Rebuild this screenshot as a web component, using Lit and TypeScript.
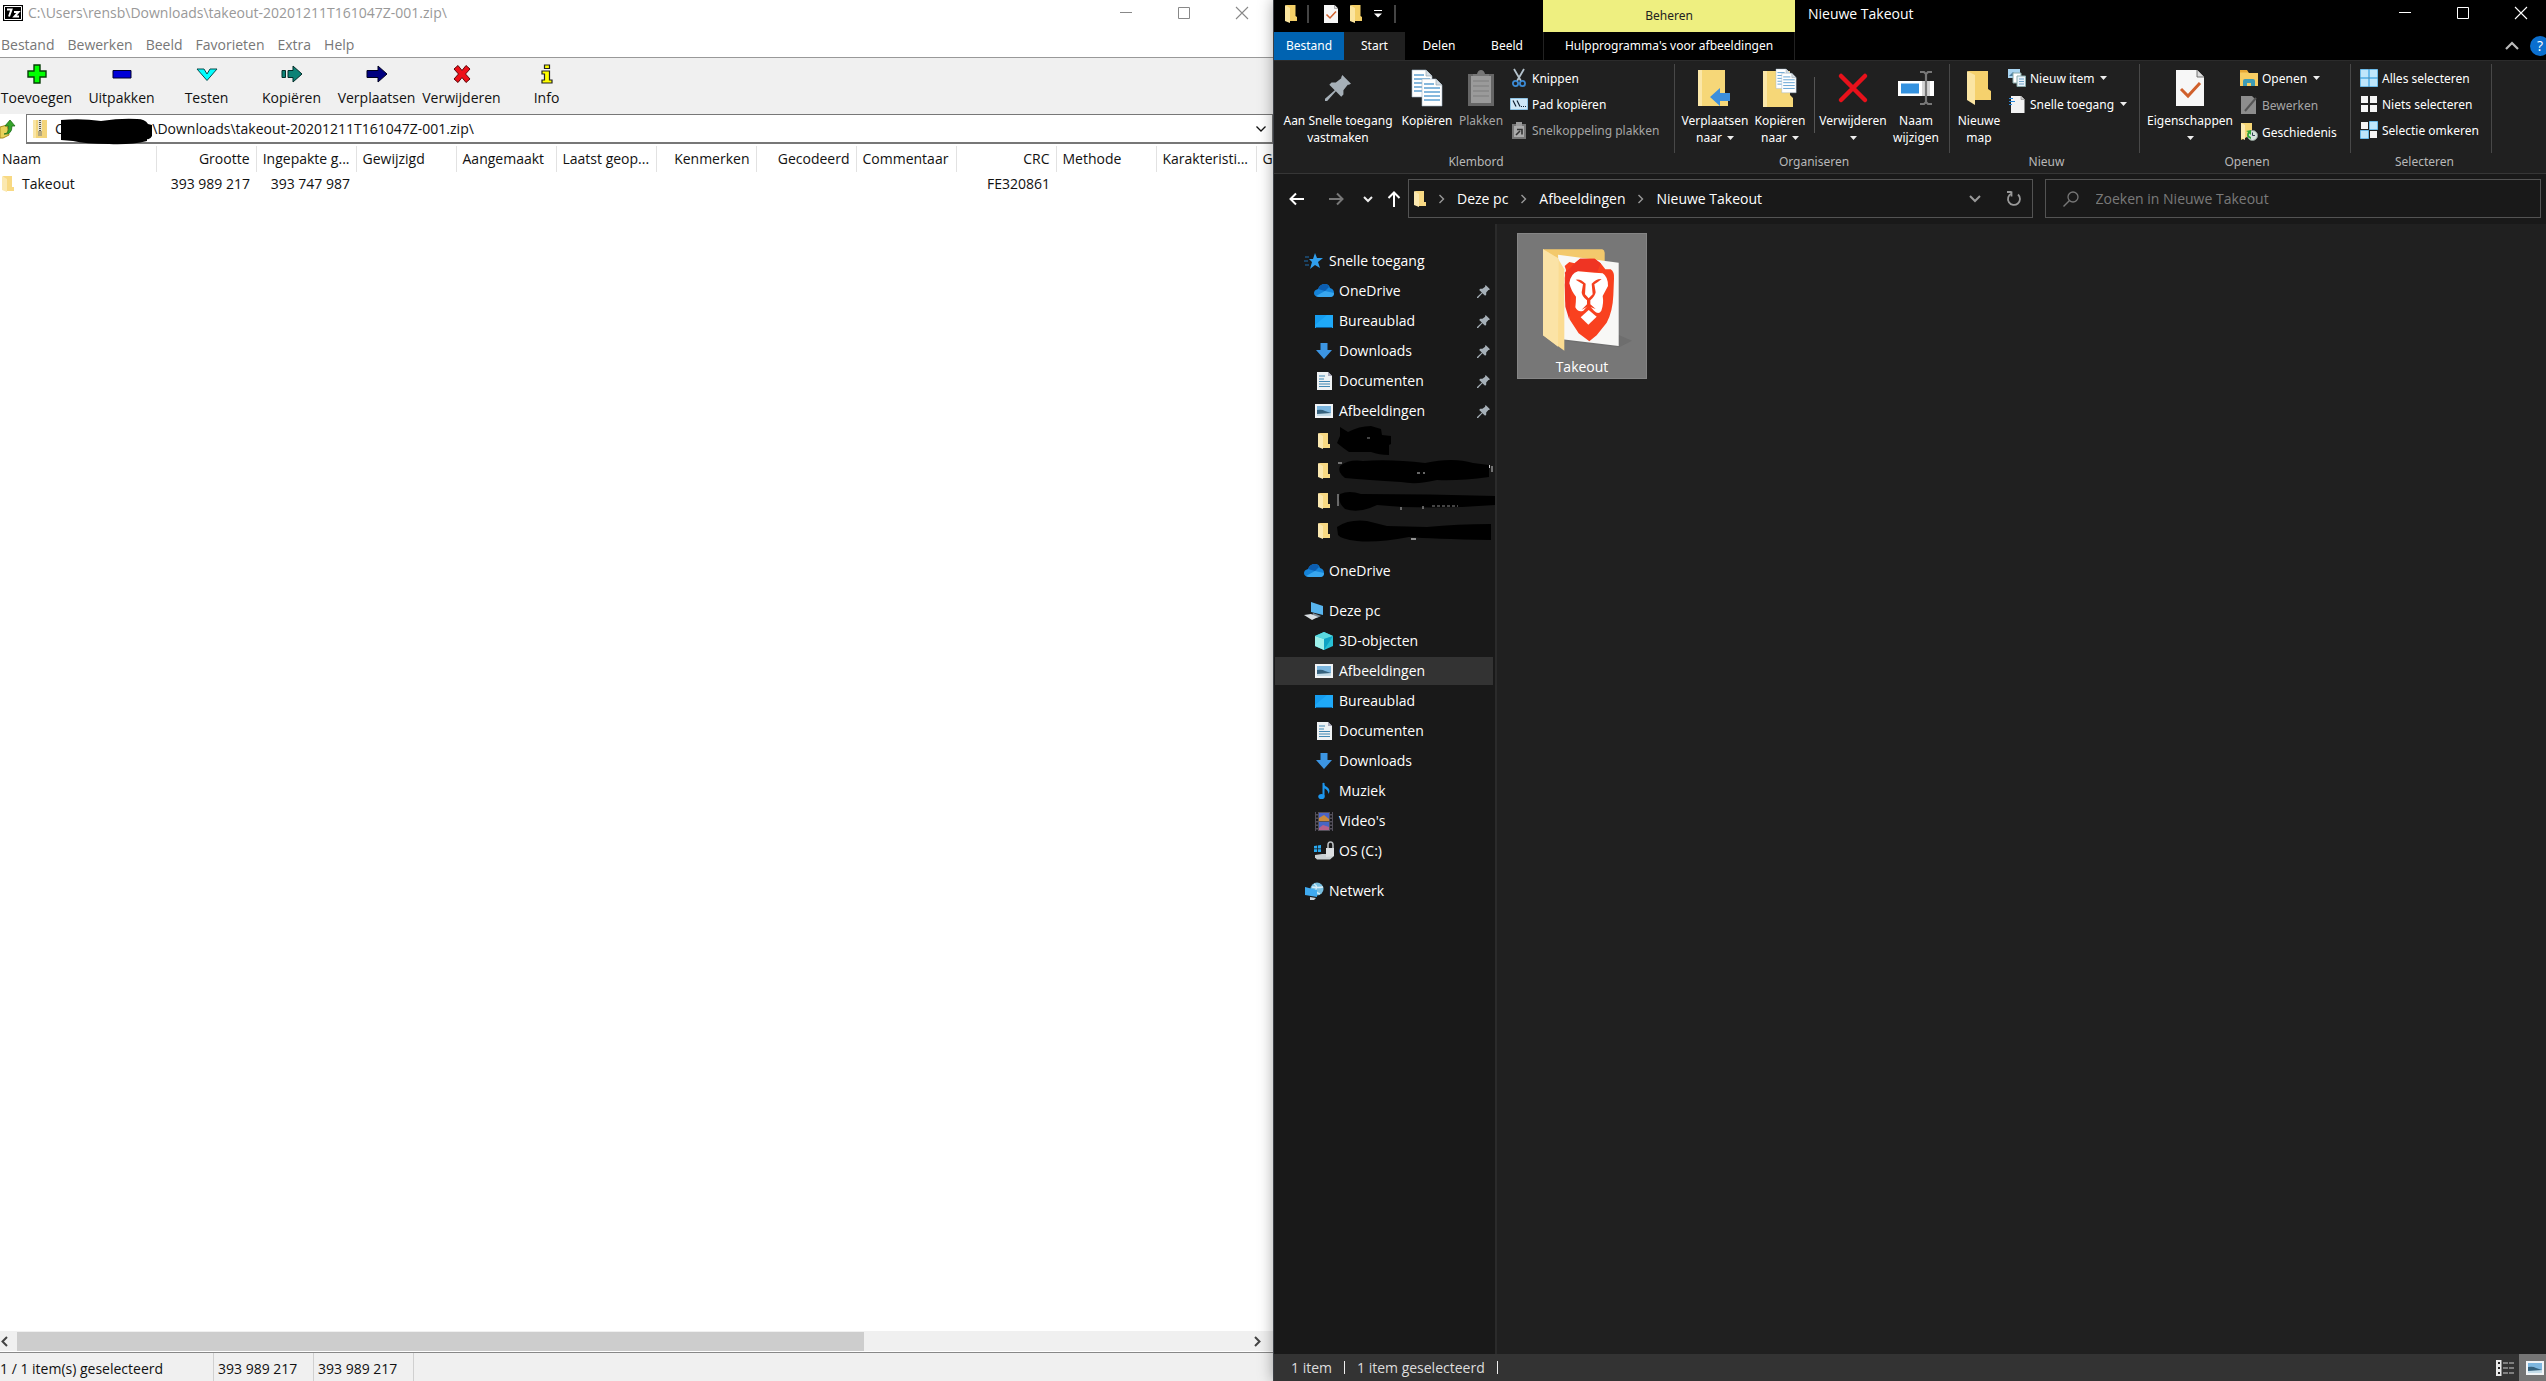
import { LitElement, html, svg, css, nothing, TemplateResult } from "lit";
import { customElement } from "lit/decorators.js";
import { classMap } from "lit/directives/class-map.js";

type Icon = TemplateResult;

const icon = (w: number, h: number, body: unknown, box = `0 0 ${w} ${h}`): Icon =>
  html`<svg width=${w} height=${h} viewBox=${box} aria-hidden="true">${body}</svg>`;

const shared = css`
  * {
    box-sizing: border-box;
  }
  button,
  input {
    font: inherit;
    color: inherit;
    background: none;
    border: 0;
    padding: 0;
    margin: 0;
    outline: 0;
  }
  svg {
    display: block;
    flex: none;
    overflow: visible;
  }
`;

/* ---------- window controls ---------- */
const minimizeIcon = icon(12, 12, svg`<path d="M0 5.5h12" stroke="currentColor"/>`);
const maximizeIcon = icon(12, 12, svg`<path d="M.5 .5h11v11H.5z" fill="none" stroke="currentColor"/>`);
const closeIcon = icon(12, 12, svg`<path d="M0 0l12 12M12 0L0 12" stroke="currentColor" stroke-width="1.1"/>`);

/* ---------- archive manager icons ---------- */
const logo7z = icon(20, 16, svg`<path d="M0 0h20v16H0z" fill="#000"/><path d="M1.5 1.5h17v13h-17z" fill="none" stroke="#fff"/>
  <path d="M4 4.5h4.500L6 11.500M11 7h4.500L11.500 11.500h4.500" fill="none" stroke="#fff" stroke-width="2"/>`);
const addIcon = icon(20, 20, svg`<path d="M7 1h6v6h6v6h-6v6H7v-6H1V7h6z" fill="#0f0" stroke="#063f06" stroke-width="1.400"/>`);
const extractIcon = icon(20, 20, svg`<path d="M1 6.500h18v7.500H1z" fill="#0000d8" stroke="#00002c"/>`);
const testIcon = icon(22, 20, svg`<path d="M1 5h7l3 5 3-5h7L11 16.500z" fill="#0ff" stroke="#0a4c4c"/>`);
const copyIcon = icon(22, 20, svg`<path d="M1 6.500h3.500v7H1zM7 6.500h5V2l9 8-9 8v-4.500H7z" fill="#0c8276" stroke="#032c28"/>`);
const moveIcon = icon(22, 20, svg`<path d="M1 6.500h11V2l9 8-9 8v-4.500H1z" fill="#000080" stroke="#00001e"/>`);
const deleteIcon = icon(18, 20, svg`<path d="M1 5l4-3.500 4 5 4-5L17 5l-4.500 5L17 15l-4 3.500-4-5-4 5L1 15l4.500-5z" fill="#ee1018" stroke="#5d0508"/>`);
const infoIcon = icon(12, 20, svg`<path d="M3.500 1h5v3.500h-5zM1 7h7.500v9H11v3H1v-3h2.500v-6H1z" fill="#ff0" stroke="#222" stroke-width="1.200"/>`);
const upFolderIcon = icon(15, 20, svg`<path d="M0 8l7-2 2 10-6 3H0z" fill="#e8d25c" stroke="#a88c20"/>
  <path d="M4 15q5 0 4.500-8H5l5-6 5 6h-3q0 9-8 8z" fill="#35a42a" stroke="#1b6b16" stroke-width=".8"/>`);
const zipIcon = icon(14, 18, svg`<path d="M0 0h14v18H0z" fill="#f3d47a"/><path d="M0 0h3v18H0z" fill="#f9e5a5"/>
  <path d="M5 0h4v11H5z" fill="#e9e4d0"/><path d="M7 0v11" stroke="#5d5a4c" stroke-width="2" stroke-dasharray="1 1"/>
  <path d="M5 11h4v5H5z" fill="#b5a87c"/>`);
const chevronDown = icon(10, 6, svg`<path d="M.5 .5L5 5 9.500 .5" fill="none" stroke="currentColor" stroke-width="1.300"/>`);
const arrowLeft = icon(7, 11, svg`<path d="M6 1L1.500 5.500 6 10" fill="none" stroke="#444" stroke-width="2"/>`);
const arrowRight = icon(7, 11, svg`<path d="M1 1l4.500 4.500L1 10" fill="none" stroke="#444" stroke-width="2"/>`);
const pathRedaction = icon(92, 26, svg`<path d="M0 1Q20 -1 40 2 60 -1 76 0q8 0 11 5l4 1v11q-2 4-5 3v2Q70 26 48 25 24 25 12 22L0 21z" fill="#000"/>`);

/* ---------- explorer icons ---------- */
const folder = icon(12, 18, svg`<path d="M1 0h9.500v11l1.500 1v4H4z" fill="#f4cf67"/><path d="M0 0l5 3v15l-5-2z" fill="#fbe59f"/>`);
const folderSoft = icon(12, 16, svg`<path d="M1 0h9v11h2v4H4z" fill="#f8d983"/><path d="M0 0l5 3v13l-5-2z" fill="#fbe8b0"/>`);
const checkDoc = (w: number, h: number) =>
  icon(w, h, svg`<path d="M0 0h21l7 7v29H0z" fill="#f7f7f7"/><path d="M21 0v7h7" fill="#ddd" stroke="#555" stroke-width=".8"/>
  <path d="M5 19l7 7 12-13" fill="none" stroke="#d0602c" stroke-width="3"/>`, "0 0 28 36");
const quickCaret = icon(8, 8, svg`<path d="M0 .5h8" stroke="#fff"/><path d="M0 3.500h8l-4 4z" fill="#fff"/>`);
const caret = icon(7, 4, svg`<path d="M0 0h7L3.500 4z" fill="#eee"/>`);
const pinShape = svg`<path d="M16 0l8 8-2 1-1 0-4 5 0 4-2 2-5-5-8 9-2 0 0-2 9-8-5-5 2-2 4 0 5-4 0-1z" fill="#a6b0b8"/>`;
const bigPin = icon(26, 26, pinShape, "0 0 24 24");
const smallPin = icon(13, 13, pinShape, "0 0 24 24");
const page = (x: number, y: number) => svg`<g transform="translate(${x} ${y})">
  <path d="M0 0h14l6 6v21H0z" fill="#fff" stroke="#9db4c4" stroke-width=".6"/><path d="M14 0v6h6" fill="#d4dde4" stroke="#8a9aa5" stroke-width=".6"/>
  <path d="M2 5h10M2 9h16M2 13h16M2 17h16M2 21h16" stroke="#5fa1d2" stroke-width="1.300"/></g>`;
const copyPages = icon(30, 36, svg`${page(0, 0)}${page(10, 9)}`);
const clipboard = icon(26, 36, svg`<path d="M0 4h26v32H0z" fill="#666"/><path d="M3 6h20v27H3z" fill="#9a9a9a"/>
  <path d="M5 6V4h4q1-4 4-4t4 4h4v2z" fill="#777"/><path d="M5 11h16M5 16h16M5 21h16M5 26h16" stroke="#7d7d7d"/>`);
const scissors = icon(14, 18, svg`<path d="M2 0l7 12M12 0L5 12" stroke="#b4c2cc" stroke-width="1.800"/>
  <circle cx="3.500" cy="14.500" r="2.600" fill="none" stroke="#3b8ad4" stroke-width="1.800"/><circle cx="10.500" cy="14.500" r="2.600" fill="none" stroke="#3b8ad4" stroke-width="1.800"/>`);
const copyPath = icon(18, 12, svg`<path d="M.5 .5h17v11H.5z" fill="#cfe8f8" stroke="#8fc3e4"/>
  <path d="M3 2.500l3 6M7 2.500l3 6" stroke="#123" stroke-width="1.200"/><path d="M11 8.500h5" stroke="#123" stroke-dasharray="1 1"/>`);
const pasteLink = icon(14, 17, svg`<path d="M0 2h14v15H0z" fill="#777"/><path d="M2 4h10v11H2z" fill="#aaa"/><path d="M4 0h6v4H4z" fill="#999"/>
  <path d="M4 13l4-4M5 7.500h5v5" fill="none" stroke="#333" stroke-width="1.600"/>`);
const moveTo = icon(34, 36, svg`<path d="M0 0h27v24l3 3v9H0z" fill="#f6d778"/><path d="M0 0h4v36H0z" fill="#fbe7a8"/>
  <path d="M12 27l10-9v5h10v8H22v5z" fill="#3d8fdc"/>`);
const copyTo = icon(34, 38, svg`<path d="M0 2h27v24l3 3v9H0z" fill="#f6d778"/><path d="M0 2h4v36H0z" fill="#fbe7a8"/>
  <g transform="translate(13 0) scale(.72)">${page(0, 0)}${page(8, 6)}</g>`);
const bigDelete = icon(28, 28, svg`<path d="M2 2l24 24M26 2L2 26" stroke="#e8111b" stroke-width="4.500" stroke-linecap="round"/>`);
const rename = icon(36, 34, svg`<path d="M0 10h36v15H0z" fill="#fff"/><path d="M3 12.500h18v10H3z" fill="#3391df"/><path d="M24 10h8v15h-8z" fill="#d5d5d5"/>
  <path d="M22 1h4l2 2 2-2h4M22 33h4l2-2 2 2h4M28 3v28" fill="none" stroke="#777" stroke-width="2.200"/>`);
const newFolder = icon(24, 34, svg`<path d="M1 0h20v18l3 2v9H7z" fill="#f5d16d"/><path d="M0 0l8 4v30l-8-5z" fill="#fbe5a3"/>`);
const newItem = icon(18, 18, svg`<path d="M0 0h12v9H0z" fill="#a8d4f0"/><path d="M1 7l4-4 4 4z" fill="#4c7fa0"/>
  <path d="M5 4h8v10H5z" fill="#fff" stroke="#8aa"/><path d="M9 7h8.500v10.500H9z" fill="#e8f2fa" stroke="#8aa"/><path d="M11 10h5M11 12.500h5M11 15h5" stroke="#6ea3c9"/>`);
const quickAccess = icon(16, 18, svg`<path d="M2 1h10l3.500 3.500V18H2z" fill="#f3f3f3"/><path d="M12 1v3.500h3.500" fill="#ccc" stroke="#888" stroke-width=".6"/>
  <path d="M0 3.500h4M0 6.500h6M0 9.500h3" stroke="#2b88d8" stroke-width="1.200"/>`);
const openIcon = icon(18, 17, svg`<path d="M0 1h7l2 2h9v13H0z" fill="#f7cd62"/><path d="M0 0h7l1.500 2.500H0z" fill="#e7a936"/>
  <path d="M3 16v-5q0-2 2-2h8q2 0 2 2v5h-4v-3H7v3z" fill="#3d9bb5"/>`);
const editIcon = icon(16, 18, svg`<path d="M0 0h11l4 4v14H0z" fill="#8d8d8d"/><path d="M4 15L15 2" stroke="#555" stroke-width="2"/>`);
const historyIcon = icon(17, 18, svg`<path d="M0 0h11v14H6L0 17z" fill="#f6d676"/><path d="M0 0l4 2v15l-4-2z" fill="#fcebb2"/>
  <circle cx="11.500" cy="12.500" r="5" fill="#d7e3dc" stroke="#8e9b94"/><path d="M10 16q-6-2-3-7l-2-1 5-1 0 5-1.500-1.500q-2 2 1.500 3.500z" fill="#2ea836"/><path d="M11.500 9.500v3h2.500" fill="none" stroke="#345"/>`);
const grid = (fills: string[]) =>
  icon(18, 18, fills.map((on, i) => {
    const x = (i % 2) * 9, y = Math.floor(i / 2) * 9;
    return on === "b"
      ? svg`<path d="M${x + 0.5} ${y + 0.5}h8v8h-8z" fill="#bfe6fb" stroke="#6cbbea"/>`
      : svg`<path d="M${x + 1} ${y + 1}h7v7h-7z" fill="#f5f5f5"/>`;
  }));
const collapse = icon(14, 8, svg`<path d="M1 7l6-6 6 6" fill="none" stroke="#bbb" stroke-width="2.200"/>`);
const navBack = icon(16, 12, svg`<path d="M15 6H1.500M7 .5L1.500 6 7 11.500" fill="none" stroke="#fff" stroke-width="2"/>`);
const navForward = icon(16, 12, svg`<path d="M1 6h13.500M9 .5L14.500 6 9 11.500" fill="none" stroke="#777" stroke-width="2"/>`);
const navRecent = icon(10, 6, svg`<path d="M1 1l4 4 4-4" fill="none" stroke="#eee" stroke-width="2"/>`);
const navUp = icon(12, 16, svg`<path d="M6 16V1.500M.5 7L6 1.500 11.500 7" fill="none" stroke="#fff" stroke-width="2"/>`);
const crumbArrow = icon(5, 8, svg`<path d="M.5 0l4 4-4 4" fill="none" stroke="#999" stroke-width="1.400"/>`);
const addressDown = icon(12, 7, svg`<path d="M1 1l5 5 5-5" fill="none" stroke="#999" stroke-width="2"/>`);
const refresh = icon(14, 15, svg`<path d="M4.500 2.500A6 6 0 1 0 11 3.500M4.500 .5v5M0 1h4.500" fill="none" stroke="#999" stroke-width="1.800"/>`);
const search = icon(16, 16, svg`<circle cx="10" cy="6" r="5" fill="none" stroke="#777" stroke-width="1.300"/><path d="M6.500 9.500L.5 15.500" stroke="#777" stroke-width="1.500"/>`);

const star = icon(20, 18, svg`<path d="M11 1l2 5h6l-5 4 2 6-5-3-5 4 2-7-3-3h4z" fill="#2f9fee"/><path d="M1 5h4M0 9h4M1 13h4" stroke="#1f6fb0"/>`);
const cloud = icon(20, 14, svg`<path d="M4 13Q0 12 0 9t4-4q2-5 7-5 4 0 5 4 4 1 4 5 0 4-4 4z" fill="#1583d8"/><path d="M4 5q2-5 7-5 3 0 4 3l-4 4z" fill="#0c5db0"/>
  <path d="M2 12l9-5 9 2q0 4-4 4H5z" fill="#38a6ee"/>`);
const desktop = icon(18, 13, svg`<path d="M0 0h18v13H0z" fill="#169df0"/><path d="M0 10L12 0h6v13H0z" fill="#1fa9f8"/><path d="M1 12.500h16" stroke="#0a5c9a"/>`);
const download = icon(16, 16, svg`<path d="M4.500 0h7v7H16l-8 9-8-9h4.500z" fill="#3c95e2"/>`);
const documents = icon(15, 18, svg`<path d="M0 0h11l4 4v14H0z" fill="#eef1f3"/><path d="M11 0v4h4" fill="#aab"/>
  <path d="M2 4h6M2 7h5M2 9.500h11M2 12h11M2 14.500h11" stroke="#3f87b4" stroke-width="1.200"/>`);
const pictures = icon(18, 14, svg`<path d="M0 0h18v14H0z" fill="#f1f4f6"/><path d="M2 2h14v10H2z" fill="#7db7e0"/><path d="M2 6q5-1 8 1l6 2v3H2z" fill="#35627e"/><path d="M2 10l14-1v3H2z" fill="#c4dce8"/>`);
const thisPc = icon(20, 18, svg`<path d="M7 0l12 4v9L7 10z" fill="#58b5ee"/><path d="M9 11l8 3-4 2-5-2z" fill="#7d8c98"/><path d="M0 13l7-1 7 3-6 3z" fill="#d9dfe3"/>`);
const objects3d = icon(18, 18, svg`<path d="M9 0l9 4v10l-9 4-9-4V4z" fill="#28c1d6"/><path d="M0 4l9 3v11l-9-4z" fill="#9df0ea"/><path d="M9 0l9 4-9 3-9-3z" fill="#5ad9df"/><path d="M9 18V7l9-3z" fill="#0fa3c4"/>`);
const music = icon(12, 18, svg`<path d="M5.500 1v13.500" stroke="#1c96ee" stroke-width="2"/><ellipse cx="3.500" cy="14.500" rx="3.200" ry="2.600" fill="#1c96ee"/><path d="M5 0q1 4 4 5 4 3 1.500 7Q10 7 5 6z" fill="#1c96ee"/>`);
const video = icon(18, 19, svg`<path d="M0 0h18v19H0z" fill="#54505a"/><path d="M4 1h10v8H4z" fill="#4a64c8"/><path d="M4 10h10v8H4z" fill="#4766c4"/>
  <path d="M4 6l5-3 5 4v2H4z" fill="#c98a3e"/><path d="M4 16l4-3 6 2v3H4z" fill="#b5618c"/><path d="M2 0v19M16 0v19" stroke="#17171a" stroke-width="2" stroke-dasharray="2 1.500"/>`);
const drive = icon(20, 18, svg`<path d="M0 4l7-1v7H0z" fill="#29a9f0"/><path d="M3.500 3v7M0 6.800h7" stroke="#191919" stroke-width=".8"/>
  <path d="M1 13l7-1h12v2l-4 3.500H3l-2-2z" fill="#c9cfd2"/><path d="M12 6h8v8l-8 1z" fill="#dde0e2"/><path d="M14 6V3q0-3 2.500-3Q19 0 19 3v3" fill="none" stroke="#b9bdc0" stroke-width="1.600"/>`);
const network = icon(19, 18, svg`<circle cx="12" cy="7" r="6.500" fill="#78bfe0"/><path d="M9 2q4 2 2 5t4 5M7 5q6 1 11 0" fill="none" stroke="#d7eef8" stroke-width="1.300"/>
  <path d="M0 5l12 3v7L0 13z" fill="#3faaf0"/><path d="M5 15l6 1-2 2H5z" fill="#c9d2d8"/>`);

const folderPreview = icon(80, 104, svg`
  <path d="M66 278L232 298 270 278 232 262z" fill="#666" opacity=".5"/>
  <path d="M3 4h178q7 2 7 10v60H30z" fill="#f3c96c"/>
  <path d="M48 20l182 24v250L60 274z" fill="#f8f8f6"/>
  <path d="M98 46l16-14h44l18 14 14 18h16q12 8 10 28l-2 50q-2 50-20 82l-30 38-22 18-32-24-26-40-14-60-2-66 4-24-4-12 14-12z" fill="#f9411f"/>
  <path d="M98 46l16-14h44l18 14-10 26-58-4-20 22-6 126-12-40-2-66 4-24-4-12 14-12z" fill="#ef3423"/>
  <path d="M108 70l50 4 24 2q16 10 16 38l-16 30q4 22-4 44-8 14-22 0l-16-18-16 18q-16 6-24-10 2-18 2-32-14-16-20-40 4-30 26-36z" fill="#fff"/>
  <path d="M101 95q14-4 30 12l-2 32 11 12 12-12-3-32q14-16 30-14-12 10-22 16l4 24q-2 12-16 24v12l16 14-22-8-20 10 16-16v-12q-16-12-16-24l4-24z" fill="#f4401f"/>
  <path d="M140 186l24 20-25 24-23-22z" fill="#fff"/>
  <path d="M3 4l44 26 20 34v244L3 262z" fill="#fbdc92"/>
  <path d="M3 4l44 26 3 8-2 258L3 262z" fill="#fbe3a6"/>`, "0 0 240 312");

const detailsView = icon(18, 16, svg`<path d="M0 0h5.500v16H0z" fill="#e8e8e8"/><path d="M2 2h2v2H2zM2 7h2v2H2zM2 12h2v2H2z" fill="#222"/><path d="M7 3h11M7 8h11M7 13h11" stroke="#ccc" stroke-dasharray="5 1"/>`);

const marks = [
  icon(55, 30, svg`<path d="M3 1l8 5Q22 0 34 0l10 3 1 6 9 1v8l-2 1v10q-10 0-18-3H12Q6 22 0 17l3-7z" fill="#000"/><path d="M30 12h3" stroke="#888"/>`),
  icon(150, 26, svg`<path d="M3 8Q12 1 26 3q28-2 62 2 28-6 48 0l16 2v12q-30 4-52 3-20 5-36 2Q30 22 8 20 0 14 3 8z" fill="#000"/><path d="M1 5h4M80 15h3M86 15h2" stroke="#ccc"/><path d="M152.500 7v3M155 8v6" stroke="#ccc"/>`),
  icon(156, 22, svg`<path d="M3 4Q12 0 24 4q70 0 134 2v9Q90 20 40 15 22 24 8 19 0 12 3 4z" fill="#000"/><path d="M1 4v12M64 17v3M86 16v3" stroke="#bbb"/><path d="M95 16h26" stroke="#888" stroke-dasharray="3 2"/>`),
  icon(156, 24, svg`<path d="M0 8Q12 0 30 2l20 5 40 1q30-3 64-3v16q-60-1-82-3Q40 24 20 22 4 20 1 16z" fill="#000"/><path d="M74 20h5" stroke="#bbb" stroke-width="1.500"/>`),
];

@customElement("zip-window")
class ZipWindow extends LitElement {
  static styles = [
    shared,
    css`
      :host {
        display: flex;
        flex-direction: column;
        min-width: 0;
        overflow: hidden;
        background: #fff;
        color: #111;
        font: 14px/20px "Open Sans", "Noto Sans", sans-serif;
      }
      .title {
        display: flex;
        align-items: center;
        height: 26px;
        padding: 0 2px 0 3px;
        gap: 5px;
        color: #999;
      }
      h1 {
        flex: 1;
        margin: 0;
        font: inherit;
        white-space: nowrap;
      }
      .control {
        width: 58px;
        height: 26px;
        display: grid;
        place-items: center;
        color: #888;
      }
      .controls {
        display: flex;
      }
      .menu {
        display: flex;
        gap: 13px;
        align-items: center;
        height: 31px;
        padding: 6px 1px 0;
        color: #777;
      }
      .toolbar {
        display: flex;
        height: 57px;
        border-top: 1px solid #999;
        background: #f0f0f0;
      }
      .tool {
        width: 85px;
        flex: none;
        display: flex;
        flex-direction: column;
        align-items: center;
        padding-top: 6px;
        gap: 4px;
      }
      .tool:first-child {
        margin-left: -6px;
      }
      .address {
        display: flex;
        align-items: stretch;
        height: 30px;
      }
      .up {
        width: 26px;
        display: flex;
        align-items: center;
      }
      .combo {
        position: relative;
        flex: 1;
        display: flex;
        align-items: center;
        gap: 8px;
        padding: 0 6px;
        border: 1px solid #777;
        border-bottom-width: 2px;
      }
      .combo input {
        flex: 1;
        min-width: 0;
      }
      .redaction {
        position: absolute;
        left: 34px;
        top: 4px;
      }
      .list {
        flex: 1;
        overflow: hidden;
        padding-top: 2px;
      }
      table {
        width: 1356px;
        table-layout: fixed;
        border-collapse: collapse;
      }
      .first {
        width: 156px;
      }
      .col {
        width: 100px;
      }
      th,
      td {
        height: 26px;
        padding: 0 6px;
        font-weight: 400;
        text-align: left;
        white-space: nowrap;
        overflow: hidden;
      }
      th {
        border-right: 1px solid #e2e2e2;
      }
      th:first-child,
      td:first-child {
        padding-left: 2px;
      }
      td {
        height: 24px;
      }
      .num {
        text-align: right;
      }
      .name {
        display: flex;
        align-items: center;
        gap: 8px;
      }
      .scroll {
        display: flex;
        align-items: center;
        height: 20px;
        padding: 0 12px 0 1px;
        background: #f0f0f0;
      }
      .track {
        flex: 1;
        height: 19px;
        padding: 0 10px 0 9px;
      }
      .thumb {
        width: 69%;
        height: 100%;
        background: #cdcdcd;
      }
      .status {
        display: flex;
        height: 29px;
        margin-top: 1px;
        border-top: 1px solid #888;
        background: #f0f0f0;
      }
      .cell {
        width: 100px;
        padding-left: 4px;
        border-right: 1px solid #d0d0d0;
        line-height: 32px;
      }
      .cell:first-child {
        width: 214px;
        padding: 0;
      }
    `,
  ];

  private tools: [Icon, string][] = [
    [addIcon, "Toevoegen"],
    [extractIcon, "Uitpakken"],
    [testIcon, "Testen"],
    [copyIcon, "Kopiëren"],
    [moveIcon, "Verplaatsen"],
    [deleteIcon, "Verwijderen"],
    [infoIcon, "Info"],
  ];

  private columns: [string, string, boolean][] = [
    ["Grootte", "393 989 217", true],
    ["Ingepakte g...", "393 747 987", true],
    ["Gewijzigd", "", false],
    ["Aangemaakt", "", false],
    ["Laatst geop...", "", false],
    ["Kenmerken", "", true],
    ["Gecodeerd", "", true],
    ["Commentaar", "", false],
    ["CRC", "FE320861", true],
    ["Methode", "", false],
    ["Karakteristi...", "", false],
    ["G", "", false],
  ];

  render() {
    const path = "C:\\Users\\rensb\\Downloads\\takeout-20201211T161047Z-001.zip\\";
    return html`
      <header class="title">
        ${logo7z}
        <h1>${path}</h1>
        <div class="controls">
          <button class="control" aria-label="Minimaliseren">${minimizeIcon}</button>
          <button class="control" aria-label="Maximaliseren">${maximizeIcon}</button>
          <button class="control" aria-label="Sluiten">${closeIcon}</button>
        </div>
      </header>
      <nav class="menu">
        ${["Bestand", "Bewerken", "Beeld", "Favorieten", "Extra", "Help"].map((m) => html`<button>${m}</button>`)}
      </nav>
      <div class="toolbar">
        ${this.tools.map(([i, t]) => html`<button class="tool">${i}<span>${t}</span></button>`)}
      </div>
      <div class="address">
        <button class="up" aria-label="Omhoog">${upFolderIcon}</button>
        <div class="combo">
          ${zipIcon}
          <input aria-label="Pad" .value=${path} />
          <span class="redaction">${pathRedaction}</span>
          <button aria-label="Paden">${chevronDown}</button>
        </div>
      </div>
      <main class="list">
        <table>
          <colgroup>
            <col class="first" />
            ${this.columns.map(() => html`<col class="col" />`)}
          </colgroup>
          <thead>
            <tr>
              <th>Naam</th>
              ${this.columns.map(([h, , n]) => html`<th class=${classMap({ num: n })}>${h}</th>`)}
            </tr>
          </thead>
          <tbody>
            <tr>
              <td><span class="name">${folderSoft}Takeout</span></td>
              ${this.columns.map(([, v, n]) => html`<td class=${classMap({ num: n })}>${v}</td>`)}
            </tr>
          </tbody>
        </table>
      </main>
      <div class="scroll">
        <button aria-label="Naar links">${arrowLeft}</button>
        <div class="track"><div class="thumb"></div></div>
        <button aria-label="Naar rechts">${arrowRight}</button>
      </div>
      <footer class="status">
        <span class="cell">1 / 1 item(s) geselecteerd</span>
        <span class="cell">393 989 217</span>
        <span class="cell">393 989 217</span>
      </footer>
    `;
  }
}

interface Big {
  icon: Icon;
  lines: string[];
  size: string;
  menu?: boolean;
  dim?: boolean;
  rule?: boolean;
}
interface Small {
  icon: Icon;
  text: string;
  menu?: boolean;
  dim?: boolean;
}
interface Group {
  label: string;
  name: string;
  big: Big[];
  small: Small[];
}
interface Place {
  icon: Icon;
  text?: string;
  top?: boolean;
  pinned?: boolean;
  active?: boolean;
  gap?: boolean;
  mark?: number;
}

@customElement("explorer-window")
class ExplorerWindow extends LitElement {
  static styles = [
    shared,
    css`
      :host {
        position: relative;
        display: flex;
        flex-direction: column;
        min-width: 0;
        overflow: hidden;
        background: #202020;
        color: #fff;
        border-left: 1px solid #3c4046;
        font: 14px/20px "Open Sans", "Noto Sans", sans-serif;
      }
      .top {
        display: grid;
        grid-template-columns: 269px 252px 1fr auto;
        grid-template-rows: 32px 28px;
        background: #000;
      }
      .quick {
        display: flex;
        align-items: center;
        height: 28px;
        padding-left: 11px;
      }
      .rule {
        width: 2px;
        height: 18px;
        border: 1px solid #444;
        margin: 0 15px 0 10px;
      }
      .quick .after {
        margin: 0 12px;
      }
      .context {
        display: grid;
        place-items: center;
        background: #eeef80;
        color: #222;
        font: 12px/18px "Noto Sans", sans-serif;
      }
      h1 {
        margin: 0;
        padding: 4px 0 0 13px;
        font: inherit;
      }
      .controls {
        display: flex;
        margin-right: -4px;
      }
      .control {
        width: 58px;
        height: 26px;
        display: grid;
        place-items: center;
      }
      .tabs {
        display: flex;
        font: 12px/18px "Noto Sans", sans-serif;
      }
      .tab {
        width: 68px;
        text-align: center;
      }
      .file {
        width: 70px;
        background: #0063b1;
      }
      .start {
        width: 61px;
        background: #202020;
      }
      .tool-tab {
        font: 12px/18px "Noto Sans", sans-serif;
        border: solid #222;
        border-width: 0 1px;
      }
      .help-area {
        grid-column: 3 / span 2;
        display: flex;
        justify-content: flex-end;
        align-items: center;
        gap: 11px;
        margin-right: -4px;
      }
      .help {
        width: 20px;
        height: 20px;
        border-radius: 50%;
        background: #0b6fcf;
        font-size: 14px;
        line-height: 20px;
      }
      .ribbon {
        display: flex;
        height: 114px;
        padding-top: 3px;
        border-top: 1px solid #2b2b2b;
        border-bottom: 1px solid #363636;
        font: 12px/17px "Noto Sans", sans-serif;
      }
      .group {
        flex: none;
        display: flex;
        flex-direction: column;
        padding-left: 3px;
        background: linear-gradient(#484848, #484848) right top / 1px 89px no-repeat;
      }
      .klembord {
        width: 401px;
      }
      .organiseren {
        width: 275px;
      }
      .nieuw {
        width: 190px;
      }
      .openen {
        width: 211px;
      }
      .selecteren {
        width: 141px;
        padding-left: 6px;
      }
      .commands {
        display: flex;
        height: 89px;
      }
      .label {
        text-align: center;
        line-height: 22px;
        color: #b8b8b8;
      }
      .big {
        display: flex;
        flex-direction: column;
        align-items: center;
        flex: none;
        white-space: nowrap;
      }
      .pin {
        width: 122px;
      }
      .wide {
        width: 94px;
      }
      .mid {
        width: 74px;
      }
      .norm {
        width: 56px;
      }
      .slim {
        width: 52px;
      }
      .pic {
        height: 48px;
        flex: none;
        display: grid;
        place-items: center;
      }
      .line {
        display: flex;
        align-items: center;
        justify-content: center;
        gap: 5px;
        min-height: 17px;
      }
      .divider {
        width: 1px;
        height: 56px;
        margin: 13px 1px 0 6px;
        background: #555;
      }
      .smalls {
        display: flex;
        flex-direction: column;
        padding: 1px 0 0 3px;
      }
      .small {
        display: flex;
        align-items: center;
        gap: 4px;
        height: 26px;
        white-space: nowrap;
      }
      .openen .smalls {
        gap: 1px;
      }
      .small .ico {
        width: 18px;
        display: grid;
        place-items: center;
      }
      .small svg:last-child {
        margin-left: 2px;
      }
      .small .ico svg {
        margin: 0;
      }
      .dim {
        color: #a5a5a5;
      }
      .nav {
        display: flex;
        height: 50px;
        padding: 5px 5px 6px 15px;
        background: #191919;
      }
      .navs {
        display: flex;
        align-items: center;
        gap: 18px;
        flex: none;
        width: 119px;
      }
      .navs button:nth-child(2) {
        margin: 0 1px 0 5px;
      }
      .navs button:last-child {
        margin-left: -3px;
      }
      .address,
      .search {
        display: flex;
        align-items: center;
        border: 1px solid #535353;
      }
      .address {
        flex: 606;
        padding: 0 11px 0 5px;
      }
      .crumbs {
        flex: 1;
        display: flex;
        align-items: center;
        gap: 13px;
        white-space: nowrap;
      }
      .crumbs a {
        color: inherit;
        text-decoration: none;
      }
      .drop {
        margin-right: 26px;
      }
      .search {
        flex: 460;
        margin-left: 12px;
        padding: 0 17px;
        gap: 17px;
      }
      .search input {
        flex: 1;
        min-width: 0;
      }
      .search input::placeholder {
        color: #7a7a7a;
        opacity: 1;
      }
      .body {
        flex: 1;
        display: flex;
        min-height: 0;
      }
      .side {
        flex: none;
        width: 223px;
        padding-top: 23px;
        background: #191919;
        border-right: 2px solid #2b2b2b;
      }
      .place {
        display: flex;
        align-items: center;
        gap: 5px;
        height: 28px;
        margin: 0 2px 2px 1px;
        padding-left: 39px;
        color: inherit;
        text-decoration: none;
      }
      .place.root {
        padding-left: 29px;
      }
      .place.gap {
        margin-top: 12px;
      }
      .place.active {
        background: #333;
      }
      .place .ico {
        width: 20px;
        flex: none;
        display: grid;
        place-items: center;
      }
      .place .text {
        flex: 1;
      }
      .place .stuck {
        margin-right: 3px;
      }
      .mark {
        flex: 1;
        display: flex;
        align-items: center;
        height: 28px;
        margin-left: -2px;
      }
      .files {
        flex: 1;
        padding: 9px 20px;
      }
      .item {
        width: 130px;
        height: 146px;
        display: flex;
        flex-direction: column;
        align-items: center;
        justify-content: flex-end;
        gap: 5px;
        padding-bottom: 1px;
        background: #777;
        border: 1px solid #858585;
      }
      .status {
        display: flex;
        align-items: center;
        height: 27px;
        padding-left: 17px;
        gap: 12px;
        background: #333;
        color: #ddd;
      }
      .bar {
        width: 1px;
        height: 13px;
        background: #eee;
      }
      .views {
        display: flex;
        align-items: center;
        margin-left: auto;
        gap: 5px;
        height: 100%;
      }
      .view {
        width: 27px;
        height: 27px;
        display: grid;
        place-items: center;
        padding-left: 4px;
        background: #757575;
      }
    `,
  ];

  private groups: Group[] = [
    {
      label: "Klembord",
      name: "klembord",
      big: [
        { icon: bigPin, lines: ["Aan Snelle toegang", "vastmaken"], size: "pin" },
        { icon: copyPages, lines: ["Kopiëren"], size: "norm" },
        { icon: clipboard, lines: ["Plakken"], size: "slim", dim: true },
      ],
      small: [
        { icon: scissors, text: "Knippen" },
        { icon: copyPath, text: "Pad kopiëren" },
        { icon: pasteLink, text: "Snelkoppeling plakken", dim: true },
      ],
    },
    {
      label: "Organiseren",
      name: "organiseren",
      big: [
        { icon: moveTo, lines: ["Verplaatsen", "naar"], size: "mid", menu: true },
        { icon: copyTo, lines: ["Kopiëren", "naar"], size: "norm", menu: true, rule: true },
        { icon: bigDelete, lines: ["Verwijderen", ""], size: "mid", menu: true },
        { icon: rename, lines: ["Naam", "wijzigen"], size: "slim" },
      ],
      small: [],
    },
    {
      label: "Nieuw",
      name: "nieuw",
      big: [{ icon: newFolder, lines: ["Nieuwe", "map"], size: "slim" }],
      small: [
        { icon: newItem, text: "Nieuw item", menu: true },
        { icon: quickAccess, text: "Snelle toegang", menu: true },
      ],
    },
    {
      label: "Openen",
      name: "openen",
      big: [{ icon: checkDoc(28, 36), lines: ["Eigenschappen", ""], size: "wide", menu: true }],
      small: [
        { icon: openIcon, text: "Openen", menu: true },
        { icon: editIcon, text: "Bewerken", dim: true },
        { icon: historyIcon, text: "Geschiedenis" },
      ],
    },
    {
      label: "Selecteren",
      name: "selecteren",
      big: [],
      small: [
        { icon: grid(["b", "b", "b", "b"]), text: "Alles selecteren" },
        { icon: grid(["w", "w", "w", "w"]), text: "Niets selecteren" },
        { icon: grid(["w", "b", "b", "w"]), text: "Selectie omkeren" },
      ],
    },
  ];

  private places: Place[] = [
    { icon: star, text: "Snelle toegang", top: true },
    { icon: cloud, text: "OneDrive", pinned: true },
    { icon: desktop, text: "Bureaublad", pinned: true },
    { icon: download, text: "Downloads", pinned: true },
    { icon: documents, text: "Documenten", pinned: true },
    { icon: pictures, text: "Afbeeldingen", pinned: true },
    { icon: folderSoft, mark: 0 },
    { icon: folderSoft, mark: 1 },
    { icon: folderSoft, mark: 2 },
    { icon: folderSoft, mark: 3 },
    { icon: cloud, text: "OneDrive", top: true, gap: true },
    { icon: thisPc, text: "Deze pc", top: true, gap: true },
    { icon: objects3d, text: "3D-objecten" },
    { icon: pictures, text: "Afbeeldingen", active: true },
    { icon: desktop, text: "Bureaublad" },
    { icon: documents, text: "Documenten" },
    { icon: download, text: "Downloads" },
    { icon: music, text: "Muziek" },
    { icon: video, text: "Video's" },
    { icon: drive, text: "OS (C:)" },
    { icon: network, text: "Netwerk", top: true, gap: true },
  ];

  private renderBig(b: Big) {
    return html`<button class=${classMap({ big: true, dim: !!b.dim, [b.size]: true })}>
        <span class="pic">${b.icon}</span>
        ${b.lines.map((l, i) => html`<span class="line">${l}${b.menu && i === 1 ? caret : nothing}</span>`)}
      </button>
      ${b.rule ? html`<span class="divider"></span>` : nothing}`;
  }

  private renderPlace(p: Place) {
    return html`<a href="#" class=${classMap({ place: true, root: !!p.top, gap: !!p.gap, active: !!p.active })}>
      <span class="ico">${p.icon}</span>
      ${p.text ? html`<span class="text">${p.text}</span>` : html`<span class="mark">${marks[p.mark ?? 0]}</span>`}
      ${p.pinned ? html`<span class="stuck">${smallPin}</span>` : nothing}
    </a>`;
  }

  render() {
    return html`
      <header class="top">
        <div class="quick">
          ${folder}<span class="rule"></span>${checkDoc(14, 18)}<span class="after">${folder}</span>
          ${quickCaret}<span class="rule after"></span>
        </div>
        <div class="context">Beheren</div>
        <h1>Nieuwe Takeout</h1>
        <div class="controls">
          <button class="control" aria-label="Minimaliseren">${minimizeIcon}</button>
          <button class="control" aria-label="Maximaliseren">${maximizeIcon}</button>
          <button class="control" aria-label="Sluiten">${closeIcon}</button>
        </div>
        <nav class="tabs">
          <button class="tab file">Bestand</button>
          <button class="tab start">Start</button>
          <button class="tab">Delen</button>
          <button class="tab">Beeld</button>
        </nav>
        <button class="tool-tab">Hulpprogramma's voor afbeeldingen</button>
        <div class="help-area">
          <button aria-label="Lint minimaliseren">${collapse}</button>
          <button class="help">?</button>
        </div>
      </header>
      <section class="ribbon">
        ${this.groups.map(
          (g) => html`<div class="group ${g.name}">
            <div class="commands">
              ${g.big.map((b) => this.renderBig(b))}
              ${g.small.length
                ? html`<div class="smalls">
                    ${g.small.map(
                      (s) => html`<button class=${classMap({ small: true, dim: !!s.dim })}>
                        <span class="ico">${s.icon}</span><span>${s.text}</span>${s.menu ? caret : nothing}
                      </button>`
                    )}
                  </div>`
                : nothing}
            </div>
            <div class="label">${g.label}</div>
          </div>`
        )}
      </section>
      <div class="nav">
        <div class="navs">
          <button aria-label="Vorige">${navBack}</button>
          <button aria-label="Volgende">${navForward}</button>
          <button aria-label="Recente locaties">${navRecent}</button>
          <button aria-label="Omhoog">${navUp}</button>
        </div>
        <div class="address">
          <div class="crumbs">
            ${folderSoft}
            ${["Deze pc", "Afbeeldingen", "Nieuwe Takeout"].map((c) => html`${crumbArrow}<a href="#">${c}</a>`)}
          </div>
          <button class="drop" aria-label="Vorige locaties">${addressDown}</button>
          <button aria-label="Vernieuwen">${refresh}</button>
        </div>
        <label class="search">
          ${search}
          <input type="text" placeholder="Zoeken in Nieuwe Takeout" />
        </label>
      </div>
      <div class="body">
        <nav class="side">${this.places.map((p) => this.renderPlace(p))}</nav>
        <main class="files">
          <button class="item">${folderPreview}<span>Takeout</span></button>
        </main>
      </div>
      <footer class="status">
        <span>1 item</span><span class="bar"></span><span>1 item geselecteerd</span><span class="bar"></span>
        <div class="views">
          <button aria-label="Details">${detailsView}</button>
          <button class="view" aria-label="Grote pictogrammen">${pictures}</button>
        </div>
      </footer>
    `;
  }
}

@customElement("app-root")
class AppRoot extends LitElement {
  static styles = css`
    :host {
      display: grid;
      grid-template-columns: minmax(0, 1fr) minmax(0, 1fr);
      height: 100vh;
      overflow: hidden;
      background: #fff;
    }
    explorer-window {
      box-shadow: 0 0 14px rgba(0, 0, 0, 0.35);
    }
  `;

  render() {
    return html`<zip-window></zip-window><explorer-window></explorer-window>`;
  }
}
